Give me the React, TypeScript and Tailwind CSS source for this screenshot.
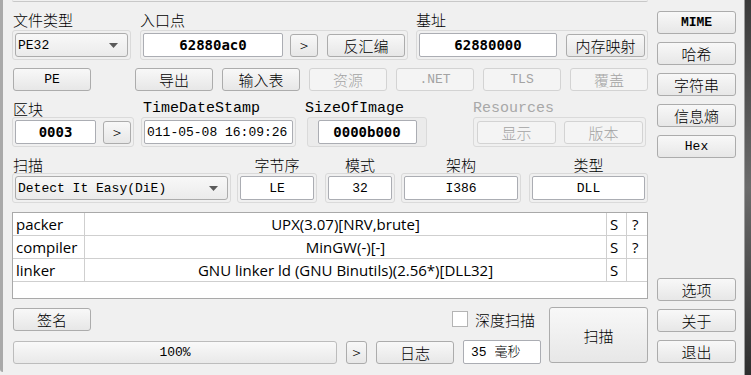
import React from "react";

const cjk = "font-['Noto_Sans_CJK_SC',sans-serif] font-light";
const mono = "font-['Liberation_Mono','Noto_Sans_CJK_SC',monospace]";
const bold = "font-['DejaVu_Sans_Mono',monospace] font-bold";

type BtnProps = {
  children: React.ReactNode;
  className?: string;
  disabled?: boolean;
  font?: string;
};

const Btn = ({ children, className = "", disabled = false, font = cjk }: BtnProps) => (
  <div
    className={`flex items-center justify-center h-[23px] rounded-[3px] border text-[15px] leading-none shrink-0 ${font} ${
      disabled
        ? "border-[#d3d3d3] bg-[#f4f4f4] text-[#a3a3a3]"
        : "border-[#acacac] bg-gradient-to-b from-[#f8f8f8] to-[#e7e7e7] text-black"
    } ${className}`}
  >
    {children}
  </div>
);

const Field = ({ children, className = "", font = bold }: { children: React.ReactNode; className?: string; font?: string }) => (
  <div
    className={`flex items-center h-[24px] rounded-[2px] border border-[#abadb3] bg-white text-[14px] leading-none text-black overflow-hidden whitespace-nowrap shrink-0 ${font} ${className}`}
  >
    {children}
  </div>
);

const Combo = ({ text, className = "" }: { text: string; className?: string }) => (
  <div
    className={`flex items-center justify-between h-[24px] rounded-[3px] border border-[#acacac] bg-gradient-to-b from-[#f8f8f8] to-[#ebebeb] pl-[2px] pr-[9px] text-[13px] leading-none text-black ${mono} ${className}`}
  >
    <span>{text}</span>
    <svg width="9" height="5" viewBox="0 0 9 5">
      <polygon points="0,0 9,0 4.5,5" fill="#5a5a5a" />
    </svg>
  </div>
);

const Frame = ({ children, className = "" }: { children: React.ReactNode; className?: string }) => (
  <div className={`flex items-center h-[30px] rounded-[3px] border border-[#dadada] p-[2px] ${className}`}>{children}</div>
);

const Label = ({
  children,
  className = "",
  color = "text-black",
}: {
  children: React.ReactNode;
  className?: string;
  color?: string;
}) => <div className={`text-[15px] leading-[18px] whitespace-nowrap ${color} ${className}`}>{children}</div>;

const rows = [
  { type: "packer", name: "UPX(3.07)[NRV,brute]", s: "S", q: "?" },
  { type: "compiler", name: "MinGW(-)[-]", s: "S", q: "?" },
  { type: "linker", name: "GNU linker ld (GNU Binutils)(2.56*)[DLL32]", s: "S", q: "" },
];

export default function App() {
  return (
    <div className={`w-[751px] h-[375px] bg-[#f0f0f0] flex overflow-hidden ${cjk}`}>
      <div className="w-[3px] h-[372px] bg-[#a9a9a9] rounded-bl-[3px] shrink-0" />

      <div className="ml-[9px] w-[636px] flex flex-col shrink-0">
        <div className="h-[2px] border-b border-[#c8c8c8] rounded-b-[2px]" />

        {/* file type / entry point / base */}
        <div className="flex mt-[9px]">
          <div className="w-[119px]">
            <Label className="h-[19px] pl-[1px]">文件类型</Label>
            <Frame>
              <Combo text="PE32" className="w-[113px]" />
            </Frame>
          </div>
          <div className="w-[268px] ml-[9px]">
            <Label className="h-[19px]">入口点</Label>
            <Frame>
              <Field className="w-[140px] justify-center">62880ac0</Field>
              <Btn className="w-[28px] ml-[7px]">&gt;</Btn>
              <Btn className="w-[78px] ml-[9px]">反汇编</Btn>
            </Frame>
          </div>
          <div className="w-[232px] ml-[8px]">
            <Label className="h-[19px]">基址</Label>
            <Frame>
              <Field className="w-[138px] justify-center">62880000</Field>
              <Btn className="w-[79px] ml-[9px]">内存映射</Btn>
            </Frame>
          </div>
        </div>

        {/* section buttons */}
        <div className="flex mt-[8px]">
          <Btn className="w-[78px] ml-[1px]" font={mono}>
            <span className="text-[13px]">PE</span>
          </Btn>
          <div className="flex gap-[9px] ml-[44px]">
            <Btn className="w-[78px]">导出</Btn>
            <Btn className="w-[78px]">输入表</Btn>
            <Btn className="w-[78px]" disabled>资源</Btn>
            <Btn className="w-[78px]" disabled font={mono}>
              <span className="text-[13px]">.NET</span>
            </Btn>
            <Btn className="w-[78px]" disabled font={mono}>
              <span className="text-[13px]">TLS</span>
            </Btn>
            <Btn className="w-[78px]" disabled>覆盖</Btn>
          </div>
        </div>

        {/* sections / timestamp / size / resources */}
        <div className="flex mt-[9px]">
          <div className="w-[122px]">
            <Label className="h-[17px] pl-[1px] leading-[15px]">区块</Label>
            <Frame>
              <Field className="w-[81px] justify-center">0003</Field>
              <Btn className="w-[28px] ml-[7px]">&gt;</Btn>
            </Frame>
          </div>
          <div className="w-[155px] ml-[7px]">
            <Label className={`h-[17px] pl-[2px] leading-[15px] text-[13px] ${mono}`}>TimeDateStamp</Label>
            <Frame className="p-[1px] pl-[2px]">
              <Field className="w-[149px] pl-[2px]" font={mono}>
                <span className="text-[13px]">011-05-08 16:09:26</span>
              </Field>
            </Frame>
          </div>
          <div className="w-[122px] ml-[9px]">
            <Label className={`h-[17px] leading-[15px] text-[13px] ${mono}`}>SizeOfImage</Label>
            <Frame className="ml-[2px] w-[120px] justify-center bg-[#ebebeb]">
              <Field className="w-[99px] justify-center h-[23px]">0000b000</Field>
            </Frame>
          </div>
          <div className="w-[173px] ml-[46px]">
            <Label className={`h-[17px] leading-[15px] text-[13px] ${mono}`} color="text-[#a8a8a8]">
              Resources
            </Label>
            <Frame className="pl-[3px]">
              <Btn className="w-[79px]" disabled>显示</Btn>
              <Btn className="w-[79px] ml-[8px]" disabled>版本</Btn>
            </Frame>
          </div>
        </div>

        {/* scan options */}
        <div className="flex mt-[9px]">
          <div className="w-[219px]">
            <Label className="h-[17px] pl-[1px] leading-[15px]">扫描</Label>
            <Frame>
              <Combo text="Detect It Easy(DiE)" className="w-[213px]" />
            </Frame>
          </div>
          {[
            { l: "字节序", v: "LE", w: "w-[80px]", m: "ml-[6px]" },
            { l: "模式", v: "32", w: "w-[70px]", m: "ml-[8px]" },
            { l: "架构", v: "I386", w: "w-[120px]", m: "ml-[6px]" },
            { l: "类型", v: "DLL", w: "w-[119px]", m: "ml-[8px]" },
          ].map((g) => (
            <div key={g.l} className={`${g.w} ${g.m}`}>
              <Label className="h-[17px] leading-[15px] text-center">{g.l}</Label>
              <Frame>
                <Field className="flex-1 justify-center" font={mono}>
                  <span className="text-[13px]">{g.v}</span>
                </Field>
              </Frame>
            </div>
          ))}
        </div>

        {/* results table */}
        <div className="mt-[9px] h-[87px] border border-[#a9a9a9] bg-white font-['Open_Sans',sans-serif] font-normal text-[15px] text-black">
          {rows.map((r) => (
            <div key={r.type} className="grid grid-cols-[72px_1fr_20px_20px] h-[23px] border-b border-[#cfcfcf]">
              <div className="pl-[3px] leading-[22px] border-r border-[#cfcfcf]">{r.type}</div>
              <div className="text-center leading-[22px] border-r border-[#cfcfcf] whitespace-nowrap">{r.name}</div>
              <div className="pl-[3px] leading-[22px] border-r border-[#cfcfcf]">{r.s}</div>
              <div className="pl-[5px] leading-[22px]">{r.q}</div>
            </div>
          ))}
        </div>

        {/* bottom */}
        <div className="flex mt-[8px]">
          <div className="w-[529px] flex flex-col">
            <div className="flex items-center h-[24px]">
              <Btn className="w-[78px] ml-[1px]">签名</Btn>
              <div className="ml-auto flex items-center mr-[6px]">
                <div className="w-[16px] h-[16px] border border-[#b4b4b4] bg-white" />
                <span className="ml-[7px] text-[15px] leading-none">深度扫描</span>
              </div>
            </div>
            <div className="flex items-center mt-[9px]">
              <div className={`w-[324px] ml-[1px] h-[23px] flex items-center justify-center rounded-[3px] border border-[#bcbcbc] bg-gradient-to-b from-[#f9f9f9] to-[#e9e9e9] text-[13px] leading-none ${mono}`}>
                100%
              </div>
              <Btn className="w-[21px] ml-[9px]">&gt;</Btn>
              <Btn className="w-[78px] ml-[9px]">日志</Btn>
              <Field className="w-[78px] ml-[9px] h-[23px] pl-[7px]" font={mono}>
                <span className="text-[13px]">35 毫秒</span>
              </Field>
            </div>
          </div>
          <Btn className="w-[99px] h-[56px] ml-[8px]">扫描</Btn>
        </div>
      </div>

      {/* right column */}
      <div className="ml-[9px] w-[79px] flex flex-col shrink-0 pt-[11px]">
        <div className="flex flex-col gap-[8px]">
          <Btn font={mono}>
            <span className="text-[13px] font-bold">MIME</span>
          </Btn>
          <Btn>哈希</Btn>
          <Btn>字符串</Btn>
          <Btn>信息熵</Btn>
          <Btn font={mono}>
            <span className="text-[13px]">Hex</span>
          </Btn>
        </div>
        <div className="flex flex-col gap-[8px] mt-[120px]">
          <Btn>选项</Btn>
          <Btn>关于</Btn>
          <Btn>退出</Btn>
        </div>
      </div>

      <div className="flex-1" />
      <div className="w-[1px] bg-[#9c9c9c] shrink-0" />
      <div className="w-[6px] bg-gradient-to-b from-[#3a3a3a] via-[#6b6b6b] to-[#2e2e2e] shrink-0" />
    </div>
  );
}
